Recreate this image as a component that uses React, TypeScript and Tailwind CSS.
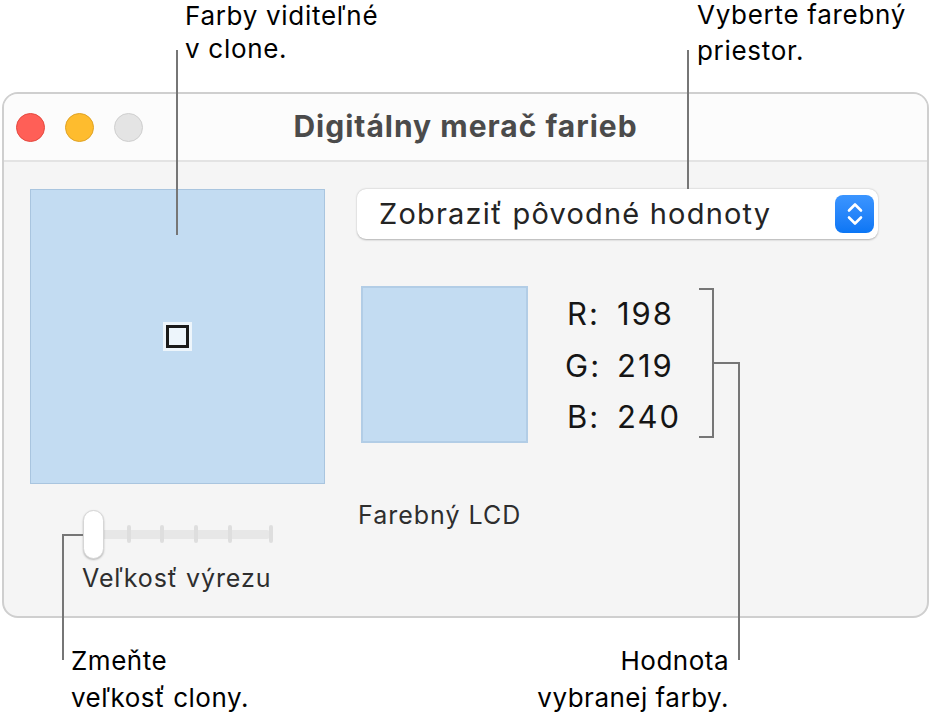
import React from "react";

const font = { fontFamily: "Inter, 'Noto Sans', sans-serif" };

function Line({ className }: { className: string }) {
  return <div className={`absolute bg-[#767676] ${className}`} />;
}

function Stepper() {
  return (
    <div className="flex h-[38px] w-[39px] items-center justify-center rounded-[8px] bg-gradient-to-b from-[#3b95ff] to-[#0a76f5]">
      <svg width="20" height="28" viewBox="0 0 20 28" fill="none">
        <path d="M4 10.5 L10 4.5 L16 10.5" stroke="white" strokeWidth="2.6" strokeLinecap="round" strokeLinejoin="round" />
        <path d="M4 17.5 L10 23.5 L16 17.5" stroke="white" strokeWidth="2.6" strokeLinecap="round" strokeLinejoin="round" />
      </svg>
    </div>
  );
}

function Slider() {
  const ticks = [44, 77, 111, 145, 186];
  return (
    <div className="relative ml-[53px] h-[49px] w-[191px]">
      <div className="absolute left-[10px] right-[3px] top-[20px] h-[9px] rounded-full bg-[#e7e7e7]" />
      {ticks.map((x) => (
        <div
          key={x}
          className="absolute top-[15px] h-[18px] w-[4px] rounded-full bg-[#dedede]"
          style={{ left: x }}
        />
      ))}
      <div className="absolute left-0 top-0 h-[49px] w-[21px] rounded-full border border-[#d6d6d6] bg-white shadow-[0_1px_2px_rgba(0,0,0,0.25)]" />
    </div>
  );
}

export default function App() {
  return (
    <div className="relative h-[718px] w-[931px] overflow-hidden bg-white" style={font}>
      {/* window */}
      <div className="mx-[2px] mt-[92px] flex h-[526px] flex-col overflow-hidden rounded-[16px] border-2 border-[#cfcfcf] bg-[#f5f5f5]">
        <div className="relative flex h-[68px] shrink-0 items-center border-b-2 border-[#e3e3e3] bg-[#fcfcfc] px-[12px]">
          <div className="flex gap-[20px]">
            <div className="h-[29px] w-[29px] rounded-full border border-[#e5493f] bg-[#ff5f57]" />
            <div className="h-[29px] w-[29px] rounded-full border border-[#e0a325] bg-[#febc2e]" />
            <div className="h-[29px] w-[29px] rounded-full border border-[#cfcfcf] bg-[#e4e4e4]" />
          </div>
          <div className="absolute inset-0 flex items-center justify-center pb-[2px] text-[30px] font-bold tracking-[1px] text-[#4b4b4b]">
            Digitálny merač farieb
          </div>
        </div>

        <div className="flex gap-[32px] pl-[26px] pt-[27px]">
          {/* left column */}
          <div className="flex flex-col">
            <div className="flex h-[295px] w-[295px] items-center justify-center border border-[#a9c5df] bg-[#c3dcf2]">
              <div className="flex h-[29px] w-[29px] items-center justify-center bg-white/70">
                <div className="h-[23px] w-[23px] border-[3px] border-[#1a1a1a]" />
              </div>
            </div>
            <div className="mt-[26px]">
              <Slider />
            </div>
            <div className="ml-[52px] mt-[4px] text-[25px] leading-[30px] tracking-[0.9px] text-[#2e2e2e]">Veľkosť výrezu</div>
          </div>

          {/* right column */}
          <div className="flex w-[521px] flex-col">
            <div className="flex h-[50px] items-center justify-between rounded-[9px] bg-white pl-[22px] pr-[4px] shadow-[0_0.5px_2px_rgba(0,0,0,0.28)]">
              <span className="text-[29px] tracking-[1.2px] text-[#242424]">Zobraziť pôvodné hodnoty</span>
              <Stepper />
            </div>

            <div className="ml-[4px] mt-[47px] flex items-start">
              <div className="h-[157px] w-[167px] border-2 border-[#b2cde6] bg-[#c3dcf2]" />
              <div className="ml-[39px] mt-[2px] flex flex-col text-[31px] leading-[51.5px] tracking-[2px] text-[#151515]">
                <div className="flex"><span className="w-[50px]">R:</span><span>198</span></div>
                <div className="flex"><span className="-ml-[2px] w-[52px]">G:</span><span>219</span></div>
                <div className="flex"><span className="w-[50px]">B:</span><span>240</span></div>
              </div>
            </div>

            <div className="ml-[1px] mt-[57px] text-[25px] leading-[30px] tracking-[1px] text-[#2e2e2e]">Farebný LCD</div>
          </div>
        </div>
      </div>

      {/* callouts */}
      <div className="absolute left-[185px] top-[-1px] text-[26px] leading-[33px] tracking-[0.7px] text-black">
        Farby viditeľné
        <br />v clone.
      </div>
      <div className="absolute left-[697px] top-[-3px] text-[26px] leading-[36px] tracking-[0.7px] text-black">
        Vyberte farebný
        <br />
        priestor.
      </div>
      <div className="absolute left-[71px] top-[642px] text-[26px] leading-[37px] tracking-[0.5px] text-black">
        Zmeňte
        <br />
        veľkosť clony.
      </div>
      <div className="absolute right-[202px] top-[642px] text-right text-[26px] leading-[37px] tracking-[0.5px] text-black">
        Hodnota
        <br />
        vybranej farby.
      </div>

      <Line className="left-[176px] top-[50px] h-[185px] w-[2px]" />
      <Line className="left-[687px] top-[50px] h-[139px] w-[2px]" />
      <Line className="left-[62px] top-[535px] h-[125px] w-[2px]" />
      <Line className="left-[62px] top-[534px] h-[2px] w-[21px]" />
      <Line className="left-[712px] top-[288px] h-[150px] w-[2px]" />
      <Line className="left-[699px] top-[288px] h-[2px] w-[15px]" />
      <Line className="left-[699px] top-[436px] h-[2px] w-[15px]" />
      <Line className="left-[712px] top-[362px] h-[2px] w-[28px]" />
      <Line className="left-[738px] top-[362px] h-[298px] w-[2px]" />
    </div>
  );
}
